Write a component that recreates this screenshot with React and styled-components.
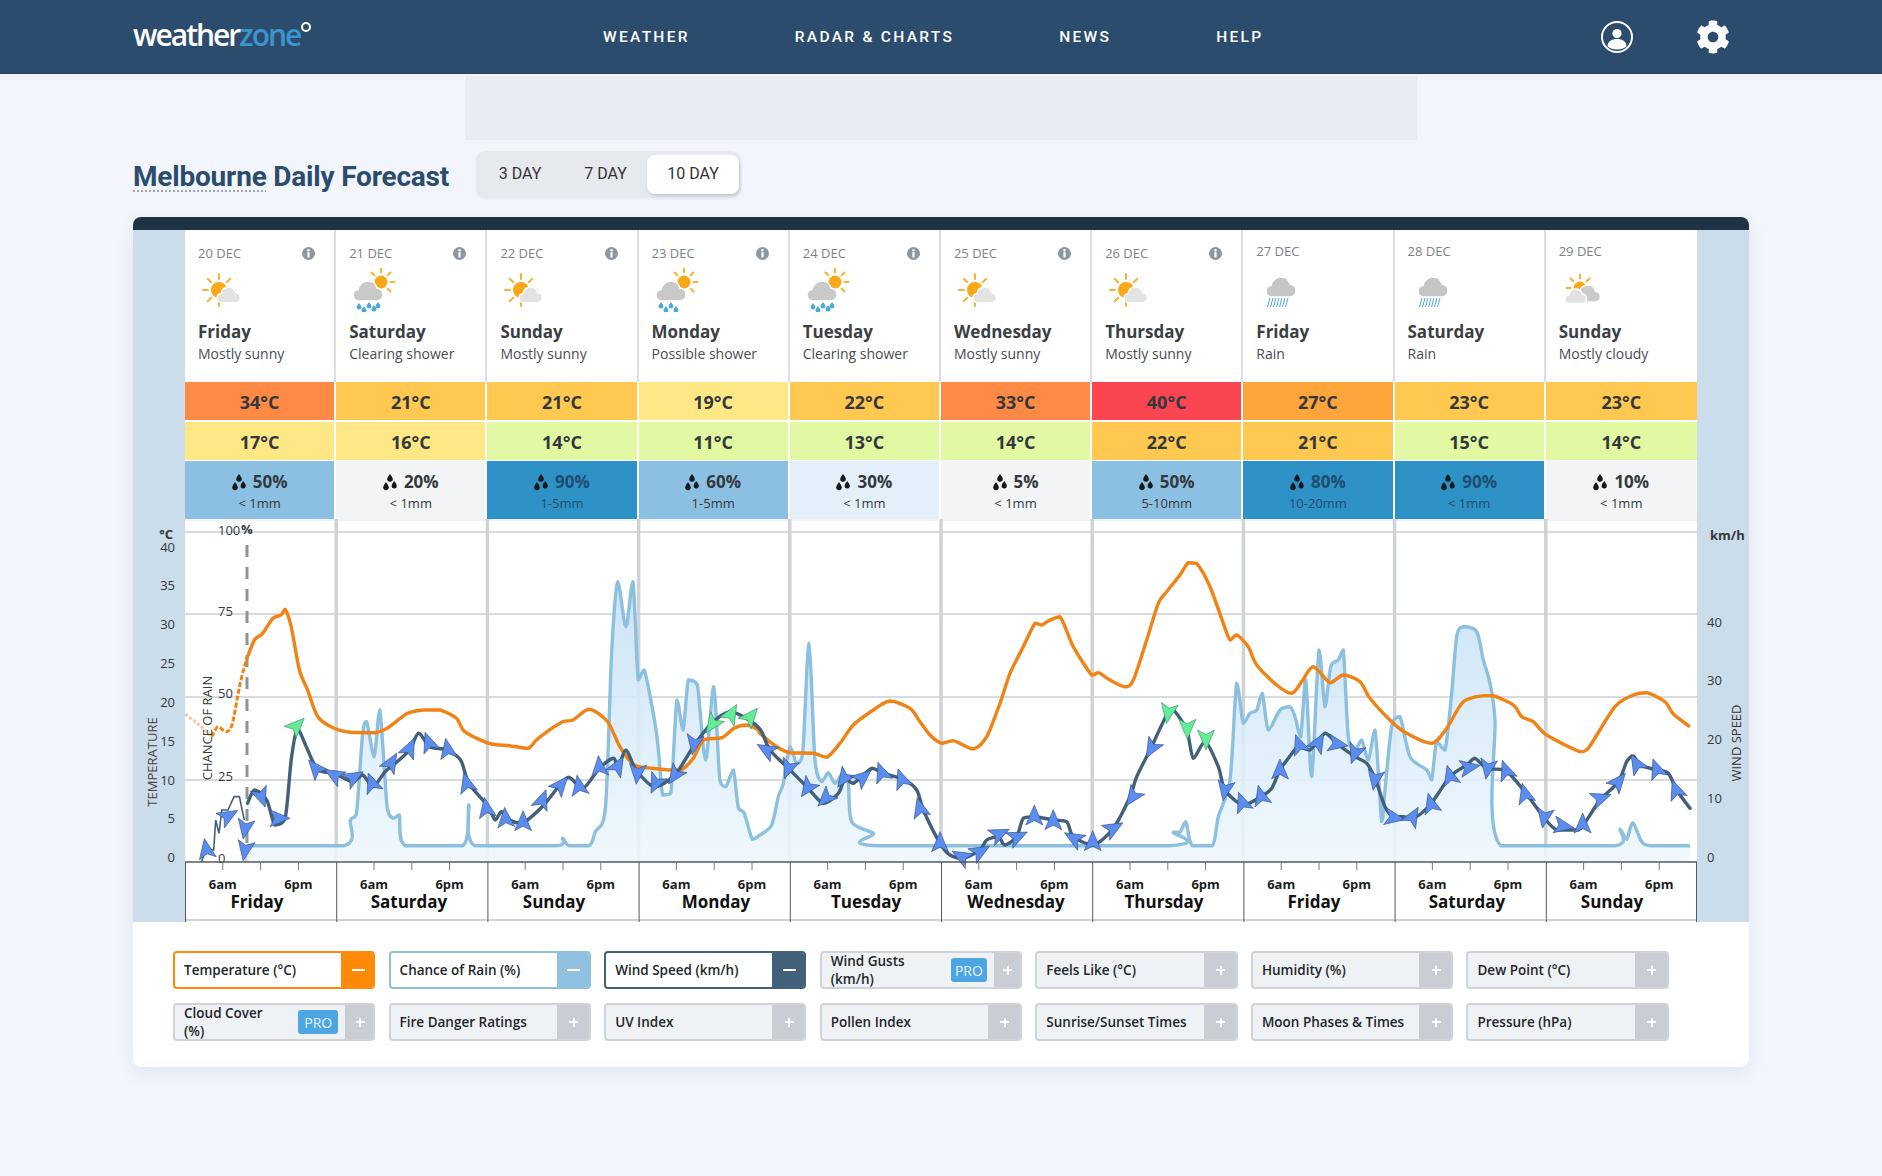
import React from 'react';
import styled, { createGlobalStyle } from 'styled-components';
import { FaCog } from 'react-icons/fa';

const GlobalStyle = createGlobalStyle`
  body {
    margin: 0;
    background: #f2f6fc;
    font-family: "Open Sans", "Liberation Sans", sans-serif;
    color: #33383d;
  }
`;

const Page = styled.div`
  min-height: 1176px;
  background: #f2f6fc;
  overflow: hidden;
`;

const Header = styled.header`
  height: 74px;
  box-sizing: border-box;
  padding: 0 152px 0 133px;
  display: flex;
  align-items: center;
  background: #2c4c6e;
  border-bottom: 1px solid #24405c;
`;

const Logo = styled.div`
  width: 179px;
  flex-shrink: 0;
  display: flex;
  align-items: flex-start;
  font-family: "Open Sans", sans-serif;
  font-size: 30px;
  font-weight: 600;
  letter-spacing: -2px;
  line-height: 36px;
  color: #fff;
  margin-top: -3px;
`;

const LogoZone = styled.span`
  color: #3b94cc;
`;

const LogoRing = styled.span`
  width: 6px;
  height: 6px;
  flex-shrink: 0;
  margin: 5px 0 0 1px;
  border: 2px solid #fff;
  border-radius: 50%;
`;

const Nav = styled.nav`
  margin-left: 291px;
  display: flex;
  gap: 105px;
`;

const NavLink = styled.a`
  font-family: Roboto, sans-serif;
  font-size: 15.500px;
  font-weight: 500;
  letter-spacing: 2.300px;
  color: #fff;
`;

const HeaderIcons = styled.div`
  margin-left: auto;
  display: flex;
  align-items: center;
  gap: 63px;
  color: #fff;
`;

const AdSlot = styled.div`
  width: 952px;
  height: 64px;
  margin: 2px auto 0;
  background: #e9edf3;
`;

const TitleRow = styled.div`
  margin: 11px 133px 0;
  display: flex;
  align-items: center;
  gap: 27px;
`;

const Title = styled.h1`
  margin: 4px 0 0;
  width: 316px;
  white-space: nowrap;
  font-family: Roboto, sans-serif;
  font-size: 28px;
  font-weight: 700;
  letter-spacing: -0.200px;
  line-height: 36px;
  color: #2c4c6e;
`;

const City = styled.span`
  text-decoration: underline dotted #9aa8b6 2px;
  text-underline-offset: 5px;
`;

const Tabs = styled.div`
  height: 47px;
  width: 265px;
  box-sizing: border-box;
  display: grid;
  grid-template-columns: 88px 83px 92px;
  align-items: center;
  background: #e6e9ed;
  border-radius: 10px;
  box-shadow: 0 1px 3px rgba(60, 80, 100, 0.08);
`;

const Tab = styled.div`
  height: 39px;
  box-sizing: border-box;
  padding-bottom: 2px;
  display: flex;
  align-items: center;
  justify-content: center;
  font-family: Roboto, sans-serif;
  font-size: 16px;
  color: #333;
  border-radius: 8px;
  background: ${(props) => (props.$active ? '#fff' : 'transparent')};
  box-shadow: ${(props) => (props.$active ? '1px 2px 3px rgba(60, 70, 90, 0.2)' : 'none')};
`;

const Panel = styled.section`
  margin: 19px 133px 0;
  background: #fff;
  border-radius: 8px;
  box-shadow: 0 6px 18px rgba(60, 90, 130, 0.09);
`;

const DarkBar = styled.div`
  height: 13px;
  background: #1f3347;
  border-radius: 8px 8px 0 0;
`;

const Body = styled.div`
  display: grid;
  grid-template-columns: 52px 1512px 52px;
`;

const AxisColumn = styled.div`
  display: flex;
  flex-direction: column;
  justify-content: flex-end;
  background: #cbdcea;
`;

const Main = styled.div`
  display: flex;
  flex-direction: column;
`;

const Days = styled.div`
  display: grid;
  grid-template-columns: repeat(10, 151.2px);
`;

const DayColumn = styled.div`
  display: flex;
  flex-direction: column;
`;

const DayHead = styled.div`
  height: 152px;
  box-sizing: border-box;
  padding-left: 13px;
  border-right: ${(props) => (props.$last ? 'none' : '2px solid #dcdedf')};
`;

const DateRow = styled.div`
  height: 32px;
  box-sizing: border-box;
  padding: ${(props) => (props.$info ? '14px' : '12px')} 19px 0 0;
  display: flex;
  justify-content: space-between;
  font-size: 13px;
  line-height: 18px;
  color: #7c8186;
  svg {
    margin-top: 3px;
  }
`;

const IconBox = styled.div`
  height: 44px;
  margin-top: 6px;
  margin-left: 1px;
`;

const DayName = styled.div`
  margin-top: 9px;
  font-size: 17px;
  font-weight: 700;
  line-height: 22px;
  color: #3a3f44;
`;

const Condition = styled.div`
  margin-top: 1px;
  font-size: 14px;
  line-height: 20px;
  color: #484d52;
`;

const TempCell = styled.div`
  height: 38px;
  box-sizing: border-box;
  padding-top: 1px;
  margin: 0 ${(props) => (props.$last ? '0' : '2px')} ${(props) => props.$gap}px 0;
  display: flex;
  align-items: center;
  justify-content: center;
  font-size: 18px;
  font-weight: 700;
  color: #33383d;
  background: ${(props) => props.$bg};
`;

const RainCell = styled.div`
  height: 58px;
  box-sizing: border-box;
  padding-top: 9px;
  margin-right: ${(props) => (props.$last ? '0' : '2px')};
  display: flex;
  flex-direction: column;
  align-items: center;
  background: ${(props) => props.$bg};
  color: ${(props) => (props.$dark ? '#1e4d70' : '#33383d')};
`;

const RainChance = styled.div`
  display: flex;
  align-items: center;
  gap: 7px;
  font-size: 17px;
  font-weight: 700;
  line-height: 24px;
`;

const RainAmount = styled.div`
  font-size: 13px;
  line-height: 18px;
`;

const ChartSvg = styled.svg`
  display: block;
`;

const ChartText = styled.text`
  font-family: "Open Sans", sans-serif;
  font-size: ${(props) => props.$size || 13}px;
  font-weight: ${(props) => props.$weight || 400};
  fill: ${(props) => props.$fill || '#33383d'};
`;

const Options = styled.div`
  padding: 29px 0 26px 40px;
  display: grid;
  grid-template-columns: repeat(7, 202.2px);
  column-gap: 13.400px;
  row-gap: 14px;
`;

const Option = styled.div`
  height: 38px;
  box-sizing: border-box;
  display: flex;
  overflow: hidden;
  border-radius: 4px;
  border: ${(props) => (props.$color ? `2px solid ${props.$color}` : '2px solid #d0d4d9')};
  background: ${(props) => (props.$color ? '#fff' : '#eff2f5')};
`;

const OptionLabel = styled.div`
  flex: 1;
  min-width: 0;
  padding: 0 ${(props) => (props.$pro ? '16px' : '0')} 0 9px;
  display: flex;
  align-items: center;
  font-size: 13.500px;
  font-weight: 600;
  line-height: 18px;
  color: #22262a;
`;

const ProBadge = styled.div`
  width: ${(props) => props.$width}px;
  height: 24px;
  margin-right: 7px;
  align-self: center;
  flex-shrink: 0;
  display: flex;
  align-items: center;
  justify-content: center;
  font-size: 14px;
  color: #e6f3fc;
  background: #4ea5e3;
  border-radius: 3px;
`;

const OptionToggle = styled.div`
  width: ${(props) => props.$width}px;
  flex-shrink: 0;
  margin: -2px -2px -2px 0;
  display: flex;
  align-items: center;
  justify-content: center;
  background: ${(props) => props.$color || '#c9ced4'};
`;

const ToggleMark = styled.div`
  position: relative;
  width: ${(props) => (props.$on ? 13 : 9)}px;
  height: 2px;
  background: #fff;
  &::after {
    content: '';
    display: ${(props) => (props.$on ? 'none' : 'block')};
    position: absolute;
    left: 3.500px;
    top: -3.500px;
    width: 2px;
    height: 9px;
    background: #fff;
  }
`;

const days = [
  { date: '20 DEC', day: 'Friday', cond: 'Mostly sunny', icon: 'sun', max: 34, maxBg: '#ff8a45', min: 17, minBg: '#fee885', pct: 50, mm: '< 1mm', rain: '#8cc0e2', info: true },
  { date: '21 DEC', day: 'Saturday', cond: 'Clearing shower', icon: 'shower', max: 21, maxBg: '#ffc851', min: 16, minBg: '#fee885', pct: 20, mm: '< 1mm', rain: '#f2f4f6', info: true },
  { date: '22 DEC', day: 'Sunday', cond: 'Mostly sunny', icon: 'sun', max: 21, maxBg: '#ffc851', min: 14, minBg: '#e2f8a2', pct: 90, mm: '1-5mm', rain: '#2e92c6', dark: true, info: true },
  { date: '23 DEC', day: 'Monday', cond: 'Possible shower', icon: 'possible', max: 19, maxBg: '#fee885', min: 11, minBg: '#e2f8a2', pct: 60, mm: '1-5mm', rain: '#8cc0e2', info: true },
  { date: '24 DEC', day: 'Tuesday', cond: 'Clearing shower', icon: 'shower', max: 22, maxBg: '#ffc851', min: 13, minBg: '#e2f8a2', pct: 30, mm: '< 1mm', rain: '#e4f0f9', info: true },
  { date: '25 DEC', day: 'Wednesday', cond: 'Mostly sunny', icon: 'sun', max: 33, maxBg: '#ff8a45', min: 14, minBg: '#e2f8a2', pct: 5, mm: '< 1mm', rain: '#f2f4f6', info: true },
  { date: '26 DEC', day: 'Thursday', cond: 'Mostly sunny', icon: 'sun', max: 40, maxBg: '#fb4550', min: 22, minBg: '#ffc851', pct: 50, mm: '5-10mm', rain: '#8cc0e2', info: true },
  { date: '27 DEC', day: 'Friday', cond: 'Rain', icon: 'rain', max: 27, maxBg: '#fea63c', min: 21, minBg: '#ffc851', pct: 80, mm: '10-20mm', rain: '#2e92c6', dark: true },
  { date: '28 DEC', day: 'Saturday', cond: 'Rain', icon: 'rain', max: 23, maxBg: '#ffc851', min: 15, minBg: '#e2f8a2', pct: 90, mm: '< 1mm', rain: '#2e92c6', dark: true },
  { date: '29 DEC', day: 'Sunday', cond: 'Mostly cloudy', icon: 'cloudy', max: 23, maxBg: '#ffc851', min: 14, minBg: '#e2f8a2', pct: 10, mm: '< 1mm', rain: '#f2f4f6' },
];

const optionRows = [
  { label: 'Temperature (°C)', color: '#ff8a0a' },
  { label: 'Chance of Rain (%)', color: '#90c1e0' },
  { label: 'Wind Speed (km/h)', color: '#43607a' },
  { label: 'Wind Gusts (km/h)', pro: 36, toggle: 28 },
  { label: 'Feels Like (°C)' },
  { label: 'Humidity (%)' },
  { label: 'Dew Point (°C)' },
  { label: 'Cloud Cover (%)', pro: 40, toggle: 30 },
  { label: 'Fire Danger Ratings' },
  { label: 'UV Index' },
  { label: 'Pollen Index' },
  { label: 'Sunrise/Sunset Times' },
  { label: 'Moon Phases & Times' },
  { label: 'Pressure (hPa)' },
];

// traced points: the three groups were read off crops with different scales
const a = (pts) => pts.map(([x, y]) => [130 + x / 2.45, 520 + y / 3]);
const b = (pts) => pts.map(([x, y]) => [760 + x / 3, 520 + y / 3]);
const c = (pts) => pts.map(([x, y]) => [1260 + x / 3, 520 + y / 3]);

const tempFaint = a([[135, 583], [165, 610], [200, 650]]);
const tempDotted = a([[200, 650], [215, 620], [235, 635], [250, 615], [270, 490], [285, 420]]);
const tempLine = [
  ...a([[285, 420], [305, 360], [325, 340], [350, 295], [370, 285], [380, 268], [395, 320], [415, 450], [435, 510], [460, 590], [500, 625], [540, 637], [600, 638], [630, 625], [680, 580], [720, 570], [760, 570], [800, 595], [820, 635], [880, 670], [930, 677], [975, 685], [1000, 655], [1060, 605], [1085, 600], [1125, 568], [1170, 605], [1200, 680], [1235, 735], [1280, 745], [1320, 750], [1350, 750], [1380, 715], [1405, 660], [1450, 653], [1480, 625], [1510, 615], [1540, 630]]),
  ...b([[0, 640], [50, 680], [90, 698], [160, 700], [200, 712], [240, 670], [280, 615], [340, 570], [390, 543], [450, 565], [480, 605], [510, 645], [545, 670], [580, 662], [640, 687], [680, 650], [720, 550], [750, 460], [790, 380], [825, 310], [845, 315], [865, 303], [900, 290], [940, 380], [995, 465], [1015, 458], [1050, 480], [1095, 500], [1120, 480], [1160, 360], [1195, 250], [1220, 215], [1260, 165], [1285, 128], [1310, 130], [1350, 200], [1390, 310], [1410, 360], [1430, 345], [1465, 380], [1490, 435]]),
  ...c([[50, 495], [95, 520], [125, 485], [160, 440], [210, 488], [250, 465], [300, 485], [330, 535], [395, 605], [440, 640], [515, 670], [560, 625], [610, 545], [670, 527], [700, 527], [760, 555], [785, 590], [820, 605], [860, 645], [960, 695], [985, 685], [1065, 560], [1120, 525], [1160, 518], [1215, 545], [1240, 582], [1290, 620]]),
];

const windThin = a([[175, 1026], [185, 990], [205, 990], [210, 900], [218, 940], [225, 870], [240, 870], [255, 830], [268, 830], [280, 900]]);
const windLine = [
  ...a([[288, 850], [305, 810], [335, 840], [355, 915], [380, 895], [395, 720], [410, 625], [430, 675], [460, 750], [500, 760], [545, 785], [570, 765], [595, 800], [625, 755], [650, 730], [685, 690], [707, 640], [735, 680], [775, 690], [810, 720], [830, 790], [875, 855], [895, 900], [910, 875], [930, 900], [960, 910], [1010, 860], [1050, 800], [1075, 772], [1110, 805], [1150, 745], [1185, 715], [1195, 745], [1215, 690], [1240, 750], [1285, 800], [1335, 765], [1380, 680], [1425, 610], [1470, 575], [1510, 595], [1545, 630]]),
  ...b([[30, 690], [85, 745], [140, 800], [190, 850], [235, 820], [255, 775], [280, 790], [335, 745], [370, 760], [430, 778], [470, 810], [490, 870], [540, 970], [570, 1005], [610, 1015], [660, 990], [680, 960], [715, 950], [735, 975], [770, 950], [790, 895], [825, 890], [880, 900], [920, 905], [940, 950], [1000, 975], [1060, 925], [1110, 830], [1130, 770], [1170, 690], [1220, 585], [1240, 570], [1280, 630], [1300, 715], [1335, 665], [1375, 740], [1395, 810], [1450, 855]]),
  ...c([[3, 830], [35, 805], [60, 750], [85, 715], [115, 680], [150, 690], [195, 640], [230, 670], [285, 710], [320, 730], [345, 775], [375, 860], [400, 890], [430, 890], [460, 895], [510, 855], [570, 770], [620, 735], [645, 715], [680, 745], [735, 750], [790, 810], [850, 890], [890, 930], [955, 930], [990, 885], [1020, 840], [1075, 785], [1100, 725], [1120, 708], [1140, 735], [1190, 750], [1225, 760], [1250, 810], [1290, 865]]),
];

const rainLine = [
  ...a([[285, 977], [525, 977], [540, 900], [555, 880], [570, 640], [580, 605], [598, 710], [612, 570], [630, 860], [645, 895], [660, 885], [675, 977], [815, 977], [830, 855], [845, 977], [1045, 977], [1060, 955], [1075, 977], [1125, 977], [1140, 935], [1165, 860], [1180, 400], [1195, 185], [1215, 320], [1232, 185], [1245, 480], [1260, 450], [1290, 640], [1305, 825], [1325, 820], [1340, 540], [1355, 630], [1368, 480], [1390, 495], [1410, 720], [1430, 500], [1445, 780], [1460, 800], [1478, 750], [1490, 860], [1505, 880], [1525, 958]]),
  ...b([[0, 945], [35, 915], [55, 830], [70, 790], [90, 680], [110, 730], [128, 700], [147, 370], [165, 720], [185, 785], [205, 758], [225, 790], [250, 760], [265, 790], [275, 905], [340, 940], [355, 977], [1225, 977], [1240, 937], [1260, 937], [1277, 905], [1297, 977], [1357, 977], [1375, 890], [1410, 780], [1430, 490], [1450, 610], [1470, 580], [1490, 570]]),
  ...c([[7, 520], [25, 630], [60, 570], [90, 560], [105, 590], [122, 650], [137, 480], [155, 770], [177, 390], [195, 560], [212, 440], [235, 420], [250, 390], [265, 650], [285, 690], [305, 660], [325, 720], [345, 630], [365, 905], [375, 810], [395, 620], [420, 590], [450, 710], [500, 750], [515, 780], [530, 665], [555, 690], [575, 520], [590, 350], [610, 320], [650, 335], [670, 420], [690, 490], [705, 600], [722, 977], [1065, 977], [1080, 928], [1100, 958], [1118, 908], [1145, 965], [1175, 977], [1290, 977]]),
];

// x, y, rotation, green
const arrows = [
  ...a([[187, 988], [240, 888], [322, 830], [365, 895], [282, 925], [282, 990], [408, 618], [455, 745], [500, 765], [548, 772], [593, 790], [640, 728], [685, 685], [732, 668], [778, 688], [825, 790], [873, 865], [920, 895], [963, 905], [1010, 840], [1055, 795], [1100, 798], [1150, 740], [1195, 738], [1243, 760], [1288, 790], [1335, 765], [1382, 672], [1427, 612], [1473, 582], [1520, 590], [1560, 690]]).map((p, i) => [...p, [-10, 60, 160, 90, 190, 190, 45, -40, -60, 60, -20, 30, 25, -20, -10, -15, -10, -5, 0, 20, 40, -10, -5, 30, 185, 205, 215, 190, 215, 30, 40, -60][i], i === 6 || (i >= 28 && i <= 30)]),
  ...b([[85, 745], [143, 803], [197, 835], [252, 775], [308, 772], [365, 758], [425, 778], [480, 865], [540, 968], [605, 1010], [660, 995], [718, 942], [772, 950], [823, 888], [880, 902], [942, 955], [998, 965], [1060, 925], [1118, 830], [1175, 685], [1225, 578], [1282, 625], [1338, 657], [1395, 810], [1447, 848], [1503, 828]]).map((p, i) => [...p, [200, 215, 225, 215, 50, -20, -20, -15, 0, -60, 60, 65, 65, 0, 0, 300, 0, 60, 215, 210, 190, 180, 180, 190, -20, -15][i], i >= 20 && i <= 22]),
  ...c([[60, 750], [118, 675], [175, 668], [232, 672], [285, 700], [345, 778], [402, 893], [458, 890], [513, 852], [570, 768], [628, 742], [683, 745], [738, 752], [795, 822], [853, 892], [910, 918], [968, 912], [1022, 835], [1075, 785], [1130, 732], [1190, 748], [1248, 810]]).map((p, i) => [...p, [0, -20, 30, 100, 200, 190, 100, 30, -15, -15, 80, 190, -20, -15, 190, 100, 0, 70, 40, -30, -20, -20][i], false]),
];

const clamp = (v, p, q) => Math.min(Math.max(v, Math.min(p, q)), Math.max(p, q));

// catmull-rom, with the control points kept inside each segment's y range so flat runs stay flat
const smooth = (pts) => {
  let d = `M${pts[0][0].toFixed(1)} ${pts[0][1].toFixed(1)}`;
  for (let i = 0; i < pts.length - 1; i += 1) {
    const p0 = pts[i - 1] || pts[i];
    const p1 = pts[i];
    const p2 = pts[i + 1];
    const p3 = pts[i + 2] || p2;
    const k = 0.14;
    const y1 = clamp(p1[1] + (p2[1] - p0[1]) * k, p1[1], p2[1]);
    const y2 = clamp(p2[1] - (p3[1] - p1[1]) * k, p1[1], p2[1]);
    d += `C${(p1[0] + (p2[0] - p0[0]) * k).toFixed(1)} ${y1.toFixed(1)} ${(p2[0] - (p3[0] - p1[0]) * k).toFixed(1)} ${y2.toFixed(1)} ${p2[0].toFixed(1)} ${p2[1].toFixed(1)}`;
  }
  return d;
};

const colX = (i) => 185 + i * 151.2;
const dayLabels = [['Friday', 257], ['Saturday', 409], ['Sunday', 554], ['Monday', 716], ['Tuesday', 866], ['Wednesday', 1016], ['Thursday', 1164], ['Friday', 1314], ['Saturday', 1467], ['Sunday', 1612]];

const CLOUD = 'M6 20C2 20 0 17 0 14C0 11 2 9 5 8.5C6 3.5 10 0 15 0C19.5 0 23 3 24 7C27.5 7.5 30 10.5 30 14C30 17.5 27 20 24 20Z';

const Sun = ({ cx, cy, r = 8, ray = 5, from = 0, to = 360 }) => {
  const lines = [];
  for (let deg = from; deg < to; deg += 45) {
    const t = (deg * Math.PI) / 180;
    lines.push(
      <line
        key={deg}
        x1={cx + Math.cos(t) * (r + 3)}
        y1={cy + Math.sin(t) * (r + 3)}
        x2={cx + Math.cos(t) * (r + 3 + ray)}
        y2={cy + Math.sin(t) * (r + 3 + ray)}
        stroke="#f9b233"
        strokeWidth="2"
        strokeLinecap="round"
      />,
    );
  }
  return (
    <g>
      {lines}
      <circle cx={cx} cy={cy} r={r} fill="#f8a818" />
    </g>
  );
};

const Cloud = ({ x, y, scale, fill }) => (
  <path d={CLOUD} transform={`translate(${x} ${y}) scale(${scale})`} fill={fill} stroke="#fff" strokeWidth={1.4 / scale} />
);

const Drops = ({ list }) => list.map(([x, y]) => (
  <path key={`${x}-${y}`} d={`M${x} ${y - 3}q2.4 3 2.4 4.2a2.4 2.4 0 0 1-4.8 0q0-1.2 2.4-4.2z`} fill="#4fa8d8" />
));

const WeatherIcon = ({ kind }) => (
  <svg width="46" height="44" viewBox="0 0 46 44">
    {kind === 'sun' && (
      <g>
        <Sun cx={20} cy={22} />
        <Cloud x={18} y={19} scale={0.78} fill="#e3e3e3" />
      </g>
    )}
    {(kind === 'shower' || kind === 'possible') && (
      <g>
        <Sun cx={31} cy={14} r={6.5} ray={4} />
        <Cloud x={3} y={13} scale={1} fill="#c9c9c9" />
        <Drops list={kind === 'shower'
          ? [[9, 38], [14, 41], [19, 37], [24, 40], [28, 37]]
          : [[8, 37], [13, 41], [18, 37], [23, 41]]}
        />
      </g>
    )}
    {kind === 'rain' && (
      <g>
        <Cloud x={9} y={9} scale={1} fill="#c6c6c6" />
        {[0, 1, 2, 3, 4, 5, 6].map((i) => (
          <line key={i} x1={13 + i * 3} y1="30" x2={10.5 + i * 3} y2="39" stroke="#4fa8d8" strokeWidth="1" />
        ))}
      </g>
    )}
    {kind === 'cloudy' && (
      <g>
        <Sun cx={20} cy={20} r={6.5} ray={4} from={180} to={361} />
        <Cloud x={15} y={17} scale={0.85} fill="#cbcbcb" />
        <Cloud x={5} y={21} scale={0.72} fill="#e1e1e1" />
      </g>
    )}
  </svg>
);

const InfoIcon = () => (
  <svg width="13" height="13" viewBox="0 0 13 13">
    <circle cx="6.500" cy="6.500" r="6.500" fill="#8c979f" />
    <circle cx="6.500" cy="3.300" r="1.200" fill="#fff" />
    <rect x="5.400" y="5.200" width="2.200" height="5.200" fill="#fff" />
  </svg>
);

const DropsIcon = () => (
  <svg width="14" height="17" viewBox="0 0 15 18" fill="#16191c">
    <path d="M7.500 0q3 3.600 3 5.200a3 3 0 0 1-6 0q0-1.600 3-5.200z" />
    <path d="M3.200 8.400q3 3.800 3 5.800a3 3 0 0 1-6 0q0-2 3-5.800z" />
    <path d="M12 7.400q2.800 3.400 2.800 5.200a2.800 2.800 0 0 1-5.600 0q0-1.800 2.800-5.200z" />
  </svg>
);

const UserIcon = () => (
  <svg width="32" height="32" viewBox="0 0 32 32">
    <circle cx="16" cy="16" r="15" fill="none" stroke="#fff" strokeWidth="2" />
    <circle cx="16" cy="12.500" r="4.600" fill="#fff" />
    <path d="M6.500 25.500c0-5 4-7.500 9.500-7.500s9.500 2.500 9.500 7.500c-2.500 2-6 3-9.500 3s-7-1-9.500-3z" fill="#fff" />
  </svg>
);

const LeftAxis = () => (
  <ChartSvg width="52" height="403" viewBox="133 519 52 403">
    <ChartText x="173" y="539" textAnchor="end" $weight={700}>°C</ChartText>
    {[[40, 552], [35, 590], [30, 629], [25, 668], [20, 707], [15, 746], [10, 785], [5, 823], [0, 862]].map(([v, y]) => (
      <ChartText key={v} x="175" y={y} textAnchor="end">{v}</ChartText>
    ))}
    <ChartText x="157" y="762" textAnchor="middle" $fill="#444" transform="rotate(-90 157 762)">TEMPERATURE</ChartText>
  </ChartSvg>
);

const RightAxis = () => (
  <ChartSvg width="52" height="403" viewBox="1697 519 52 403">
    <ChartText x="1710" y="540" $weight={700}>km/h</ChartText>
    {[[40, 627], [30, 685], [20, 744], [10, 803], [0, 862]].map(([v, y]) => (
      <ChartText key={v} x="1707" y={y}>{v}</ChartText>
    ))}
    <ChartText x="1741" y="743" textAnchor="middle" $fill="#333" transform="rotate(-90 1741 743)">WIND SPEED</ChartText>
  </ChartSvg>
);

const ForecastChart = () => (
  <ChartSvg width="1512" height="403" viewBox="185 519 1512 403">
    <defs>
      <linearGradient id="rainFill" gradientUnits="userSpaceOnUse" x1="0" y1="590" x2="0" y2="862">
        <stop offset="0" stopColor="#c5e1f5" />
        <stop offset="1" stopColor="#eef7fd" />
      </linearGradient>
    </defs>
    <line x1="185" x2="1697" y1="520" y2="520" stroke="#e4e6e8" />
    {[532, 614, 697, 780].map((y) => (
      <line key={y} x1="185" x2="1697" y1={y} y2={y} stroke="#d8dbde" strokeWidth="2" />
    ))}
    {days.slice(1).map((d, i) => (
      <line key={d.date} x1={colX(i + 1)} x2={colX(i + 1)} y1="519" y2="862" stroke="#d0d3d6" strokeWidth="3.500" />
    ))}
    <line x1="247" x2="247" y1="545" y2="862" stroke="#8f9498" strokeWidth="3" strokeDasharray="12 10" />

    <path d={`${smooth(rainLine)}L${rainLine[rainLine.length - 1][0]} 862L${rainLine[0][0]} 862Z`} fill="url(#rainFill)" fillOpacity="0.88" />
    <path d={smooth(rainLine)} fill="none" stroke="#8dc0df" strokeWidth="3.400" strokeLinejoin="round" />

    <path d={smooth(tempFaint)} fill="none" stroke="#f6c7a5" strokeWidth="3" strokeDasharray="3 2" />
    <path d={smooth(tempDotted)} fill="none" stroke="#f08314" strokeWidth="3" strokeDasharray="5 2" />
    <path d={smooth(tempLine)} fill="none" stroke="#f08314" strokeWidth="3.400" strokeLinejoin="round" />

    <path d={`M${windThin.map((p) => p.join(' ')).join('L')}`} fill="none" stroke="#43607a" strokeWidth="1.600" />
    <path d={smooth(windLine)} fill="none" stroke="#43607a" strokeWidth="3.400" strokeLinejoin="round" strokeLinecap="round" />

    {arrows.map(([x, y, rot, green]) => (
      <path
        key={`${x}-${y}`}
        d="M0 -11L8.500 9L0 4.500L-8.500 9Z"
        transform={`translate(${x.toFixed(1)} ${y.toFixed(1)}) rotate(${rot})`}
        fill={green ? '#62ee97' : '#5b8cf0'}
        stroke={green ? '#3f8a68' : '#33507c'}
        strokeWidth="0.600"
      />
    ))}

    <ChartText x="218" y="535">100</ChartText>
    <ChartText x="241" y="534" $weight={700}>%</ChartText>
    <ChartText x="218" y="616">75</ChartText>
    <ChartText x="218" y="698">50</ChartText>
    <ChartText x="218" y="781">25</ChartText>
    <ChartText x="218" y="863">0</ChartText>
    <ChartText x="212" y="728" textAnchor="middle" transform="rotate(-90 212 728)">CHANCE OF RAIN</ChartText>

    <line x1="185" x2="1697" y1="862" y2="862" stroke="#55595e" strokeWidth="1.400" />
    <line x1="185" x2="1697" y1="920" y2="920" stroke="#d0d3d6" strokeWidth="2" />
    {days.map((d, i) => (
      <g key={d.date}>
        <line x1={colX(i) + 0.5} x2={colX(i) + 0.5} y1="862" y2="922" stroke="#55595e" strokeWidth="1" />
        {[1, 2, 3].map((q) => (
          <line key={q} x1={colX(i) + q * 37.8} x2={colX(i) + q * 37.8} y1="862" y2="870" stroke="#77797c" />
        ))}
        <ChartText x={colX(i) + 37.8} y="889" textAnchor="middle" $weight={700} $fill="#1b1e21">6am</ChartText>
        <ChartText x={colX(i) + 113.4} y="889" textAnchor="middle" $weight={700} $fill="#1b1e21">6pm</ChartText>
        <ChartText x={dayLabels[i][1]} y="908" textAnchor="middle" $size={17} $weight={700} $fill="#111">{dayLabels[i][0]}</ChartText>
      </g>
    ))}
    <line x1="1696.5" x2="1696.5" y1="862" y2="922" stroke="#55595e" />
  </ChartSvg>
);

const App = () => (
  <Page>
    <GlobalStyle />
    <Header>
      <Logo>
        <span>weather</span>
        <LogoZone>zone</LogoZone>
        <LogoRing />
      </Logo>
      <Nav>
        <NavLink>WEATHER</NavLink>
        <NavLink>RADAR &amp; CHARTS</NavLink>
        <NavLink>NEWS</NavLink>
        <NavLink>HELP</NavLink>
      </Nav>
      <HeaderIcons>
        <UserIcon />
        <FaCog size={34} />
      </HeaderIcons>
    </Header>
    <AdSlot />
    <TitleRow>
      <Title>
        <City>Melbourne</City> Daily Forecast
      </Title>
      <Tabs>
        <Tab>3 DAY</Tab>
        <Tab>7 DAY</Tab>
        <Tab $active>10 DAY</Tab>
      </Tabs>
    </TitleRow>
    <Panel>
      <DarkBar />
      <Body>
        <AxisColumn>
          <LeftAxis />
        </AxisColumn>
        <Main>
          <Days>
            {days.map((d, i) => {
              const last = i === days.length - 1;
              return (
                <DayColumn key={d.date}>
                  <DayHead $last={last}>
                    <DateRow $info={d.info}>
                      <span>{d.date}</span>
                      {d.info && <InfoIcon />}
                    </DateRow>
                    <IconBox>
                      <WeatherIcon kind={d.icon} />
                    </IconBox>
                    <DayName>{d.day}</DayName>
                    <Condition>{d.cond}</Condition>
                  </DayHead>
                  <TempCell $bg={d.maxBg} $gap={2} $last={last}>{d.max}°C</TempCell>
                  <TempCell $bg={d.minBg} $gap={1} $last={last}>{d.min}°C</TempCell>
                  <RainCell $bg={d.rain} $dark={d.dark} $last={last}>
                    <RainChance>
                      <DropsIcon />
                      {d.pct}%
                    </RainChance>
                    <RainAmount>{d.mm}</RainAmount>
                  </RainCell>
                </DayColumn>
              );
            })}
          </Days>
          <ForecastChart />
        </Main>
        <AxisColumn>
          <RightAxis />
        </AxisColumn>
      </Body>
      <Options>
        {optionRows.map((o) => (
          <Option key={o.label} $color={o.color}>
            <OptionLabel $pro={Boolean(o.pro)}>{o.label}</OptionLabel>
            {o.pro && <ProBadge $width={o.pro}>PRO</ProBadge>}
            <OptionToggle $color={o.color} $width={o.toggle || 34}>
              <ToggleMark $on={Boolean(o.color)} />
            </OptionToggle>
          </Option>
        ))}
      </Options>
    </Panel>
  </Page>
);

export default App;
